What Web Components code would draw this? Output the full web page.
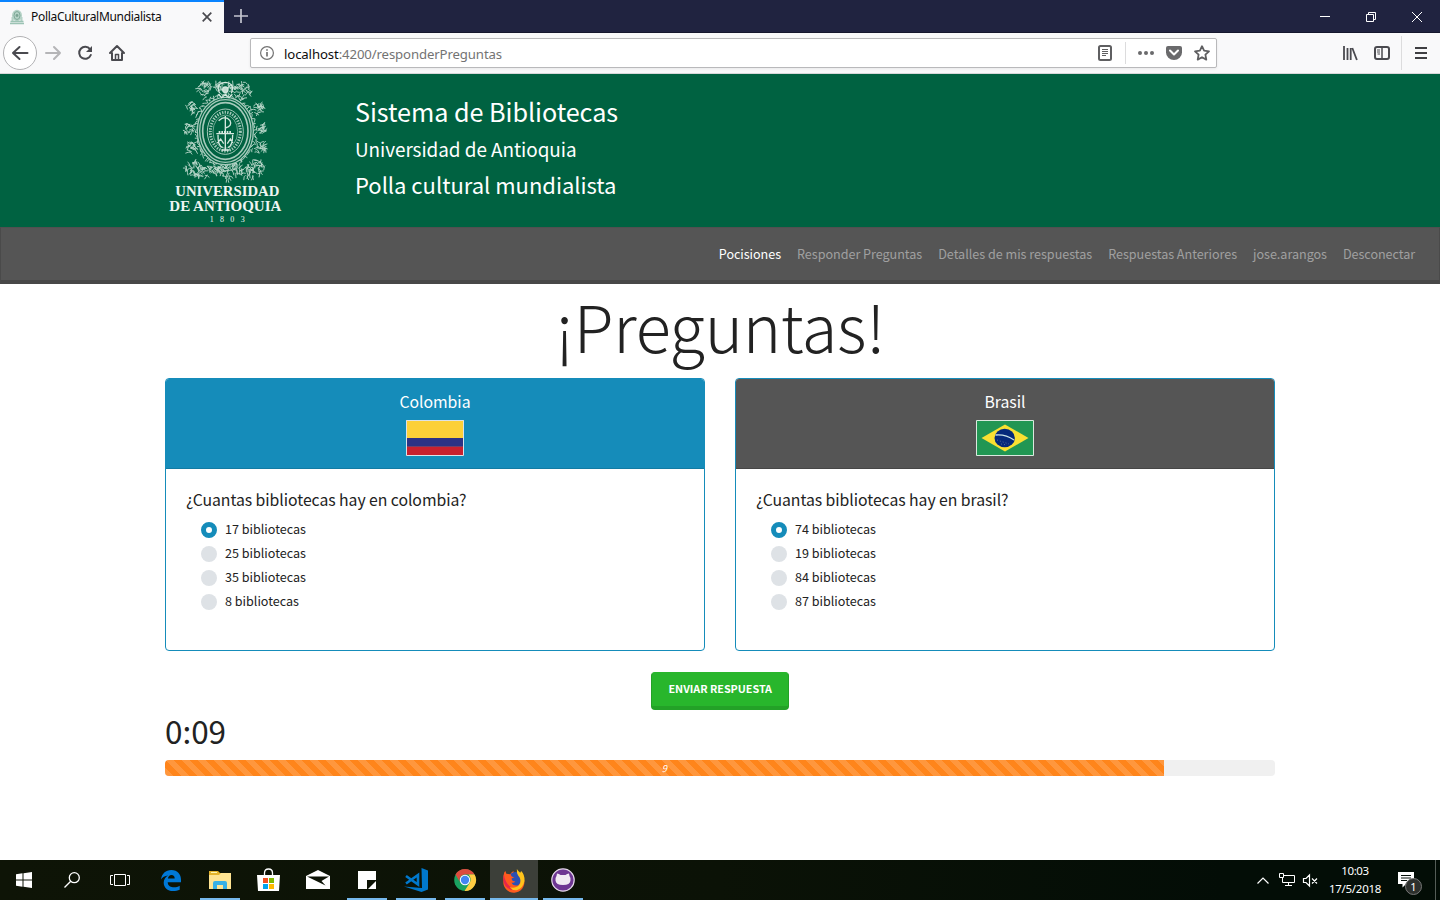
<!DOCTYPE html>
<html lang="es">
<head>
<meta charset="utf-8">
<title>PollaCulturalMundialista</title>
<style>
html,body{margin:0;padding:0}
body{width:1440px;height:900px;overflow:hidden;background:#fff;color:#222;font-family:"Noto Sans CJK SC","Noto Sans",sans-serif}
</style>
</head>
<body>
<desktop-screen></desktop-screen>
<script>
const define = (name, html, ready) => {
  const t = document.createElement('template');
  t.innerHTML = html;
  customElements.define(name, class extends HTMLElement {
    constructor() {
      super();
      this.attachShadow({mode: 'open'}).append(t.content.cloneNode(true));
    }
    connectedCallback() { if (ready) ready.call(this, this.shadowRoot); }
  });
};

/* One line of text, tracked so that it spans the width given in "w". */
define('fit-text', `<style>
:host{display:block;white-space:nowrap;flex:none}
span{display:inline-block;white-space:pre}
</style><span><slot></slot></span>`, function (root) {
  const s = root.querySelector('span'), w = +this.getAttribute('w');
  if (!w) return;
  const n = this.textContent.length;
  const gap = (w - s.getBoundingClientRect().width) / n;
  s.style.letterSpacing = gap.toFixed(3) + 'px';
});

define('browser-chrome', `<style>
:host{display:block;height:74px;flex:none;font-family:"Noto Sans","Open Sans",sans-serif}
svg{display:block;overflow:visible}
.tabs{display:flex;height:33px;background:#202340;box-shadow:inset 0 -1px #15172d}
.tab{display:flex;align-items:center;box-sizing:border-box;width:224px;height:33px;background:#f9f9fa;border-top:2px solid #0a84ff;padding:0 0 0 9px;color:#0c0c0d;font-size:12px;line-height:18px}
.tab fit-text{margin-top:-2px}
.tab svg.fav{margin:-2px 6px 0 0}
.tab .x{margin:-1px 12px 0 auto}
.plus{margin:9px 0 0 10px}
.win{display:grid;grid-template-columns:repeat(3,46px);margin-left:auto;place-items:center;height:33px}
.bar{display:flex;align-items:center;height:40px;background:#f9f9fa;border-bottom:1px solid #d8d8da}
.nav{display:grid;grid-template-columns:33px 32px 32px 32px;margin-left:4px;place-items:center}
.nav svg:first-child{margin-left:-2px}
.url{display:flex;align-items:center;box-sizing:border-box;width:968px;height:30px;margin-left:117px;background:#fff;border:1px solid #b9b9bb;border-radius:2px;box-shadow:0 1px 3px #0001;padding-left:9px;font-size:13.2px;line-height:20px;color:#737373}
.url b{font-weight:400;color:#0c0c0d}
.url fit-text{margin-left:10px;position:relative;top:1px}
.acts{margin-left:auto;display:flex;align-items:center}
.v{width:1px;background:#dcdcdd}
.right{margin-left:117px;display:grid;grid-template-columns:32px 32px 3px 1px 38px;place-items:center}
</style>
<div class="tabs">
 <div class="tab">
  <svg class="fav" width="16" height="16" viewBox="0 0 16 16"><ellipse cx="8" cy="6.500" rx="5" ry="5.800" fill="#b5d2c6"/><ellipse cx="8" cy="6.500" rx="3" ry="4" fill="none" stroke="#81aa9a"/><circle cx="8" cy="6.500" r="1.400" fill="#7aa392"/><path d="M3.500 8v4M12.500 8v4" stroke="#b5d2c6" stroke-width="2"/><path d="M1.500 12.500h13M1 14.500h14" stroke="#9cc3b4" stroke-width="1.500"/></svg>
  <fit-text w="130.500">PollaCulturalMundialista</fit-text>
  <svg class="x" width="10" height="10"><path d="M.700.700l8.600 8.600M9.300.700l-8.600 8.600" stroke="#4a4a4f" stroke-width="1.700"/></svg>
 </div>
 <svg class="plus" width="14" height="14"><path d="M7 0v14M0 7h14" stroke="#c4c5cf" stroke-width="1.700"/></svg>
 <div class="win">
  <svg width="10" height="10"><path d="M0 4.500h10" stroke="#fff"/></svg>
  <svg width="10" height="10" fill="none" stroke="#fff"><path d="M.500 2.500h7v7h-7zM2.500 2.500v-2h7v7h-2"/></svg>
  <svg width="10" height="10"><path d="M0 0l10 10M10 0L0 10" stroke="#fff"/></svg>
 </div>
</div>
<div class="bar">
 <div class="nav">
  <svg width="34" height="34" viewBox="-17 -17 34 34" fill="none"><circle r="16.500" fill="#fff" stroke="#b1b1b3"/><path d="M-7 0H7.500M-.500-6L-7 0l6.500 6" stroke="#4a4a4f" stroke-width="2" stroke-linejoin="round" stroke-linecap="round"/></svg>
  <svg width="16" height="14" fill="none"><path d="M1 7h14M9 1l6 6-6 6" stroke="#b5b5b7" stroke-width="2" stroke-linejoin="round" stroke-linecap="round"/></svg>
  <svg width="16" height="16" fill="none" stroke="#4a4a4f" stroke-width="2"><path d="M13 4.200A6 6 0 1 0 13.800 10" stroke-linecap="round"/><path d="M15 1v6H9z" fill="#4a4a4f" stroke="none"/></svg>
  <svg width="16" height="16" fill="none" stroke="#4a4a4f" stroke-width="2" stroke-linejoin="round" stroke-linecap="round"><path d="M1 8l7-7 7 7M3 8v7h10V8"/><path d="M6.500 14.500V9.500h3v5" stroke-width="1.500"/></svg>
 </div>
 <div class="url">
  <svg width="14" height="14" fill="none" stroke="#737373"><circle cx="7" cy="7" r="6.400" stroke-width="1.200"/><path d="M7 6v4.500M7 3.300v1.500" stroke-width="1.700"/></svg>
  <fit-text w="218"><b>localhost</b>:4200/responderPreguntas</fit-text>
  <div class="acts">
   <svg width="14" height="16" fill="none" stroke="#5f5f61"><rect x="1" y="1" width="12" height="14" rx="1.500" stroke-width="2"/><path d="M4 4.500h6M4 6.500h6M4 8.500h6M4 10.500h4"/></svg>
   <div class="v" style="height:22px;margin:0 12px 0 13px"></div>
   <svg width="16" height="16" fill="#6a6a6c"><circle cx="2" cy="8" r="2"/><circle cx="8" cy="8" r="2"/><circle cx="14" cy="8" r="2"/></svg>
   <svg style="margin:0 12px" width="16" height="16"><path d="M2 1h12a2 2 0 0 1 2 2v4.500a8 7.500 0 0 1-16 0V3a2 2 0 0 1 2-2z" fill="#6a6a6c"/><path d="M4 5.500l4 4 4-4" fill="none" stroke="#fff" stroke-width="2" stroke-linecap="round" stroke-linejoin="round"/></svg>
   <svg style="margin-right:6px" width="16" height="16"><path d="M8 1.200l2.100 4.500 4.900.600-3.600 3.400.900 4.900L8 12.200l-4.300 2.400.900-4.900L1 6.300l4.900-.600z" fill="none" stroke="#5f5f61" stroke-width="1.800" stroke-linejoin="round"/></svg>
  </div>
 </div>
 <div class="right">
  <svg width="16" height="16" stroke="#4a4a4f" stroke-width="1.800"><path d="M2 1v14M5.500 3v12M8.700 3v12M10.300 3l4.600 12" fill="none"/></svg>
  <svg width="16" height="14" fill="none" stroke="#4a4a4f"><rect x="1" y="1" width="14" height="12" rx="2" stroke-width="2"/><path d="M8 1v12" stroke-width="1.500"/><path d="M3 4h3M3 6h3M3.500 8h2.500"/></svg>
  <i></i><div class="v" style="height:34px"></div>
  <svg width="12" height="12" stroke="#3f3f42" stroke-width="2"><path d="M0 1h12M0 6h12M0 11h12"/></svg>
 </div>
</div>`);

/* University crest: concentric ovals inside a wreath of small scrolls. */
define('university-crest', `<style>
:host{display:block;width:150px;height:153px;flex:none}
svg{display:block}
text{font-family:"Liberation Serif",serif;fill:#eef6f2}
</style>
<svg width="150" height="153" viewBox="0 0 450 459">
<g class="wreath" fill="none" stroke="#b9d7ca" stroke-linecap="round"></g>
<g fill="none" stroke="#a5cabb">
<ellipse cx="226" cy="171" rx="84" ry="101" fill="#006241" stroke-width="4"/>
<ellipse cx="226" cy="171" rx="77" ry="94" stroke-width="4"/>
<ellipse cx="226" cy="171" rx="68" ry="85" stroke-width="5"/>
<ellipse cx="226" cy="173" rx="54" ry="68" stroke-width="3"/>
<ellipse cx="226" cy="173" rx="45" ry="58" stroke-width="9" stroke-dasharray="4 4"/>
<ellipse cx="226" cy="173" rx="37" ry="50" stroke-width="2"/>
</g>
<g fill="none" stroke="#d5e8df" stroke-width="4">
<path d="M226 126v104M206 140q20-18 34 0q8 16-14 22M199 179h53" />
<path d="M204 182q-1 34 14 38M248 182q0 34-14 38M202 207l10-12 9 14M232 209l9-14 8 12M214 228h24" />
<path d="M206 175h40" stroke-width="8" stroke-dasharray="5 3"/>
</g>
<g fill="none" stroke="#d5e8df" stroke-width="4"><path d="M209 58q-14-30 17-33q30 3 18 33M205 61l10 10 11-10 11 10 10-10"/><circle cx="226" cy="47" r="8" fill="#c5ddd2"/></g>
<text x="76" y="365" font-size="45" font-weight="700" textLength="312" lengthAdjust="spacingAndGlyphs">UNIVERSIDAD</text>
<text x="58" y="411" font-size="45" font-weight="700" textLength="336" lengthAdjust="spacingAndGlyphs">DE ANTIOQUIA</text>
<text x="179" y="445" font-size="24" textLength="105" fill="#b5d3c6">1803</text>
</svg>`, function (root) {
  const g = root.querySelector('.wreath');
  let seed = 7;
  const rnd = () => (seed = (seed * 16807) % 2147483647) / 2147483647;
  let d = '';
  const curl = (x, y, r) => {
    const a = rnd() * 6.28, b = a + 2 + rnd() * 2;
    d += `M${(x + r * Math.cos(a)).toFixed(1)} ${(y + r * Math.sin(a)).toFixed(1)}Q${(x + r * (rnd() - .5)).toFixed(1)} ${(y - r * rnd()).toFixed(1)} ${(x + r * Math.cos(b)).toFixed(1)} ${(y + r * Math.sin(b)).toFixed(1)}`;
  };
  for (let i = 0; i < 90; i++) {
    const t = i / 90 * Math.PI * 2, k = rnd() * 8;
    curl(226 + (86 + k) * Math.cos(t), 170 + (103 + k) * Math.sin(t), 6);
  }
  const clusters = [[165,50,25],[282,50,25],[122,102,18],[324,105,18],[118,165,15],[335,163,14],[124,225,18],[330,220,18],[128,283,24],[320,283,24],[155,297,20],[296,297,20],[226,296,27],[190,287,18],[262,287,18],[205,38,13],[247,38,13]];
  for (const [x, y, r] of clusters)
    for (let i = 0; i < r * 1.05; i++) {
      const a = rnd() * 6.28, q = r * Math.sqrt(rnd());
      curl(x + q * Math.cos(a), y + q * Math.sin(a), 7);
    }
  g.innerHTML = `<path d="${d}" stroke-width="2.700"/>`;
});

define('site-header', `<style>
:host{display:flex;box-sizing:border-box;height:153px;flex:none;background:#006241;padding-left:150px;color:#fff}
.t{margin:17px 0 0 55px}
.a{font-size:25.200px;line-height:40px}
.b{font-size:18.900px;line-height:36px}
.c{font-size:22px;line-height:35px}
</style>
<university-crest></university-crest>
<div class="t"><fit-text class="a" w="263">Sistema de Bibliotecas</fit-text><fit-text class="b" w="221.500">Universidad de Antioquia</fit-text><fit-text class="c" w="261.500">Polla cultural mundialista</fit-text></div>`);

define('nav-link', `<style>
:host{display:block;color:#a0a0a0}
:host([active]){color:#fff}
</style><slot></slot>`);

define('site-nav', `<style>
:host{display:flex;box-sizing:border-box;height:57px;flex:none;background:#555;border:1px solid #4a4a4a;border-top-color:#505050;border-bottom:4px solid #484848;justify-content:flex-end;align-items:center;gap:16px;padding-right:24px;font-size:12.600px;line-height:20px}
</style>
<nav-link active><fit-text w="62.200">Pocisiones</fit-text></nav-link>
<nav-link><fit-text w="125.200">Responder Preguntas</fit-text></nav-link>
<nav-link><fit-text w="154">Detalles de mis respuestas</fit-text></nav-link>
<nav-link><fit-text w="128.800">Respuestas Anteriores</fit-text></nav-link>
<nav-link><fit-text w="74">jose.arangos</fit-text></nav-link>
<nav-link><fit-text w="72">Desconectar</fit-text></nav-link>`);

define('radio-option', `<style>
:host{display:flex;align-items:center;height:24px;font-size:12.600px;line-height:20px}
i{box-sizing:border-box;width:16px;height:16px;border-radius:50%;background:#dee2e6;margin:1px 8px 0 0}
:host([checked]) i{border:5px solid #158cba;background:#fff}
</style><i></i><slot></slot>`);

define('question-card', `<style>
:host{display:block;box-sizing:border-box;width:540px;height:273px;border:1px solid #158cba;border-radius:4px;overflow:hidden;background:#fff}
header{display:flex;flex-direction:column;align-items:center;box-sizing:border-box;height:90px;background:var(--head,#158cba);border-bottom:1px solid var(--edge,#127ba3);padding-top:12px;color:#fff;font-size:15.800px;line-height:22px}
::slotted(svg){display:block;margin-top:7px;flex:none}
.q{padding:20px 0 0 20px;font-size:15.800px;line-height:22px}
.o{padding:6px 0 0 35px}
</style>
<header><slot name="country"></slot><slot name="flag"></slot></header>
<div class="q"><slot name="question"></slot></div>
<div class="o"><slot></slot></div>`);

define('send-button', `<style>
:host{display:block;box-sizing:border-box;width:138px;height:38px;border:1px solid #23a127;border-top-color:#28b62c;border-bottom-width:4px;border-radius:4px;background:#28b62c;color:#fff;font-size:10.800px;font-weight:700;line-height:16px;padding:7px 0 0 16.500px;margin:0 auto}
</style><slot></slot>`);

define('timer-bar', `<style>
:host{display:block;height:16px;border-radius:4px;background:#f0f0f0;overflow:hidden}
div{width:90%;height:16px;display:flex;justify-content:center;align-items:center;background:linear-gradient(45deg,#ffffff26 25%,transparent 25%,transparent 50%,#ffffff26 50%,#ffffff26 75%,transparent 75%) 0 0/16px 16px #ff851b;color:#fff;font-size:9.500px;font-style:italic;line-height:16px}
</style><div><slot></slot></div>`);

define('quiz-page', `<style>
:host{display:block;height:576px;flex:none;width:1110px;padding:0 165px;background:#fff}
.h{font-size:65px;font-weight:300;line-height:88px;height:94px;display:flex;justify-content:center;position:relative;top:-3px}
.cards{display:grid;grid-template-columns:540px 540px;gap:30px;margin-bottom:21px}
.time{font-size:31.500px;line-height:41px;height:50px}
</style>
<div class="h"><fit-text w="330">¡Preguntas!</fit-text></div>
<div class="cards">
<question-card><fit-text slot="country" w="71">Colombia</fit-text>
<svg slot="flag" width="58" height="36"><path fill="#fcd038" d="M0 0h58v18H0z"/><path fill="#2c3285" d="M0 18h58v8.500H0z"/><path fill="#c9202e" d="M0 26.500h58V36H0z"/><path d="M.500.500h57v35H.500z" fill="none" stroke="#dbe2e8"/></svg>
<fit-text slot="question" w="280.500">¿Cuantas bibliotecas hay en colombia?</fit-text>
<radio-option checked><fit-text w="81">17 bibliotecas</fit-text></radio-option><radio-option><fit-text w="81">25 bibliotecas</fit-text></radio-option><radio-option><fit-text w="81">35 bibliotecas</fit-text></radio-option><radio-option><fit-text w="74">8 bibliotecas</fit-text></radio-option></question-card>
<question-card style="--head:#555;--edge:#464646"><fit-text slot="country" w="41">Brasil</fit-text>
<svg slot="flag" width="58" height="36"><path fill="#219653" d="M0 0h58v36H0z"/><path fill="#f9e032" d="M5.500 18L29 4.500 52.500 18 29 31.500z"/><ellipse cx="28.700" cy="18" rx="10.200" ry="9.200" fill="#05297b"/><path d="M19.500 15q10-1 18.500 5" fill="none" stroke="#c9e3e8" stroke-width="1.300"/><path d="M21 20l12 4M25 24l6 1" stroke="#50699c" stroke-dasharray="1 2"/><path d="M.500.500h57v35H.500z" fill="none" stroke="#dbe8df"/></svg>
<fit-text slot="question" w="252.500">¿Cuantas bibliotecas hay en brasil?</fit-text>
<radio-option checked><fit-text w="81">74 bibliotecas</fit-text></radio-option><radio-option><fit-text w="81">19 bibliotecas</fit-text></radio-option><radio-option><fit-text w="81">84 bibliotecas</fit-text></radio-option><radio-option><fit-text w="81">87 bibliotecas</fit-text></radio-option></question-card>
</div>
<send-button><fit-text w="103.500">ENVIAR RESPUESTA</fit-text></send-button>
<div class="time"><fit-text w="61">0:09</fit-text></div>
<timer-bar>9</timer-bar>`);

define('task-app', `<style>
:host{display:flex;flex:none;box-sizing:border-box;width:48px;height:40px;margin-right:1px;align-items:center;justify-content:center;position:relative}
:host([open])::after{content:"";position:absolute;left:4px;right:4px;bottom:0;height:2px;background:#76b9ed}
:host([current]){background:#3c3f39}
:host([current])::after{left:0;right:0}
:host([sys]){margin:0}
</style><slot></slot>`);

define('task-bar', `<style>
:host{display:flex;height:40px;flex:none;background:linear-gradient(90deg,#0e1406,#0b1206 50%,#030d06 85%);color:#fff;font-family:"Noto Sans","Open Sans",sans-serif}
svg{display:block;overflow:visible}
.gap{width:3px}
.tray{margin-left:auto;display:flex;align-items:center}
.clock{display:flex;flex-direction:column;align-items:center;width:54px;margin:0 0 0 10px;font-size:11.500px;line-height:18px}
.note{position:relative;margin-left:16px;width:19px}
.badge{position:absolute;left:7px;top:6px;box-sizing:border-box;width:17px;height:17px;border:1px solid #777;border-radius:50%;background:#2d302d;font-size:11px;line-height:15px;text-align:center}
.edge{width:1px;height:40px;background:#555d57;margin:0 4px 0 18px}
</style>
<task-app sys><svg width="16" height="16" fill="#fff"><path d="M0 2.200L6.500 1.300V7.500H0zM7.500 1.200L16 0v7.500H7.500zM0 8.500h6.500v6.200L0 13.800zM7.500 8.500H16V16L7.500 14.800z"/></svg></task-app>
<task-app sys><svg width="16" height="16" fill="none" stroke="#fff" stroke-width="1.300"><circle cx="10.300" cy="5.700" r="5"/><path d="M6.700 9.300L.500 15.500"/></svg></task-app>
<task-app sys><svg width="20" height="14" fill="none" stroke="#fff"><path d="M4.500 1.500h11v11h-11zM3 2.500H.500v9H3M17 2.500h2.500v9H17"/></svg></task-app>
<i class="gap"></i>
<task-app><svg width="20" height="21" viewBox="0 0 20 21"><path fill="#0078d7" d="M0 9.500C.800 3.800 4.800 0 10.300 0 16.800 0 20 4.600 20 9.700V12.200H6.700C6.800 16 10 17.300 13 17.300c2.200 0 4-.600 5.700-1.600v4C16.900 20.600 14.500 21 12 21 6.600 21 2.700 17.600 2.700 12.700c0-3.200 1.700-5.800 4.400-7.200C3.800 5.700 1.300 7.400 0 9.500zM6.900 8.500h6.800c0-2.200-1.100-3.600-3.200-3.600-2 0-3.300 1.600-3.600 3.600z"/></svg></task-app>
<task-app open><svg width="22" height="18"><path fill="#e4b32c" d="M0 0h9l2 2h10v4H0z"/><path fill="#ffe492" d="M0 4h10l2-2h10v16H0z"/><path d="M4 18v-6q0-2 2-2h10q2 0 2 2v6h-4v-4H8v4z" fill="#38b0e5"/><path d="M2 1.500h6" stroke="#fff7b0"/></svg></task-app>
<task-app><svg style="margin:-1px 2px 0 0" width="23" height="22"><path fill="#fff" d="M0 6h23l-1 16H1z"/><path d="M7.500 8V4q0-4 4-4t4 4v4" fill="none" stroke="#fff" stroke-width="1.300"/><path fill="#f25022" d="M6 9h5v5H6z"/><path fill="#7fba00" d="M12 9h5v5h-5z"/><path fill="#00a4ef" d="M6 15h5v5H6z"/><path fill="#ffb900" d="M12 15h5v5h-5z"/></svg></task-app>
<task-app><svg width="24" height="19" style="margin-top:-1px"><path fill="#fff" d="M0 6L12 0l12 6v13H0z"/><path fill="#0d1306" d="M1 6.500h22L15.500 11l4 4.500L1 6.500z"/></svg></task-app>
<task-app open><svg width="18" height="18"><path fill="#fff" d="M0 0h18v18H0z"/><path fill="#0d1306" d="M9 9h9v1l-8 8H9z"/></svg></task-app>
<task-app open><svg width="24" height="24"><path fill="#0078cc" d="M17.500 0L24 2.500v19L17.500 24 0 18.500l18 1.500z"/><path fill="none" stroke="#0078cc" stroke-width="2.600" d="M2 8L14 16.500V7L2 15.500"/></svg></task-app>
<task-app open><svg width="22" height="22" viewBox="-11 -11 22 22"><circle r="10.800" fill="#1aa260"/><path fill="#dd4b3e" d="M-9.500-5.500A11 11 0 0 1 9.600-5.500H0A5.500 5.500 0 0 0-4.800 2.700z"/><path fill="#ffcd42" d="M9.600-5.500A11 11 0 0 1-.500 11L4.800 2.700Q7-1 3.500-5.500z"/><circle r="5.200" fill="#fff"/><circle r="4.200" fill="#4285f4"/></svg></task-app>
<task-app open current><svg width="22" height="23" viewBox="0 0 23 24"><path fill="#ff5a1e" d="M1 5q0-2 1.500-3l1 3 4 .500Q9 3 11 2v3l6 1 5 5A11 11 0 1 1 .500 12Q0 8 1 5z"/><path fill="#e6254c" d="M.500 12Q0 8 1 6q1 8 6 12t12 1A11 11 0 0 1 .500 12z"/><path fill="#2b50b5" d="M8 5q7-5 11 3 1 5-3 9-6 1-7-3 2 1 4-1-4 0-4-3 1-1 3-1Q8 8 8 5z"/><path fill="#ffc31b" d="M14.500 0q2 3 3.500 4l1-2q4 4 3.500 10.500Q21 20 15 22q-5 1-8-3 8 2 11-4 1-5-2-8-2-3-1.500-7z"/></svg></task-app>
<task-app open><svg width="24" height="24"><circle cx="12" cy="12" r="11.200" fill="#6e3693" stroke="#e4d9e9" stroke-width="1.200"/><path fill="#f1eaf3" d="M5.500 8l.500-2.500q2 .300 3.500 1.400h5Q16 5.800 18 5.500l.500 2.500q1.500 2 1 4.500Q19 17 12 17t-7.500-4.500Q4 10 5.500 8z"/></svg></task-app>
<div class="tray">
<svg width="12" height="7"><path d="M.500 6.500L6 1l5.500 5.500" fill="none" stroke="#fff" stroke-width="1.200"/></svg>
<svg width="16" height="14" style="margin-left:10px" fill="none" stroke="#fff"><path d="M5 2.500h10.500v7H3.500V5M.500.500h4v4h-4zM9.500 9.500v3M6 12.500h7"/></svg>
<svg width="15" height="13" style="margin-left:8px" fill="none" stroke="#fff"><path d="M.500 4.500H3l3.500-3.500v11L3 8.500H.500zM9 4.500l5 5M14 4.500l-5 5" stroke-width="1.200"/></svg>
<div class="clock"><fit-text w="27.500">10:03</fit-text><fit-text w="52">17/5/2018</fit-text></div>
<div class="note"><svg width="16" height="16"><path d="M0 0h16v12H8l-3.500 3.500V12H0z" fill="#fff"/><path d="M3 3.500h10M3 6h10M3 8.500h6" stroke="#06100a"/></svg><div class="badge">1</div></div>
<div class="edge"></div>
</div>`);

define('desktop-screen', `<style>
:host{display:flex;flex-direction:column;width:1440px;height:900px;overflow:hidden}
</style>
<browser-chrome></browser-chrome><site-header></site-header><site-nav></site-nav><quiz-page></quiz-page><task-bar></task-bar>`);
</script>
</body>
</html>
